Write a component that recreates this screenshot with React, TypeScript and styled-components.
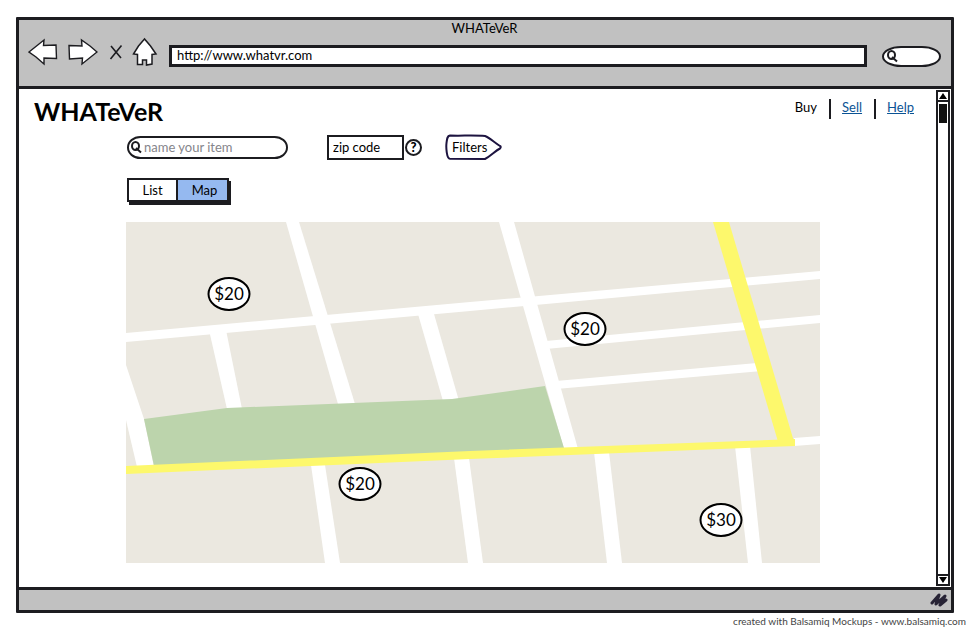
import React from "react";
import styled, { createGlobalStyle, css } from "styled-components";

const ink = "#1c1c20";
const chrome = "#c1c1c1";

const GlobalStyle = createGlobalStyle`
  *, *::before, *::after { box-sizing: border-box; }
  body {
    margin: 0;
    background: #fff;
    color: #000;
    font-family: Lato, "Liberation Sans", sans-serif;
    font-size: 13px;
    line-height: 16px;
  }
  button, input { font: inherit; color: inherit; }
`;

const Shell = styled.div`
  padding: 17px 16px 0;
`;

const BrowserWindow = styled.div`
  border: 3px solid ${ink};
  border-radius: 1px;
`;

const Chrome = styled.header`
  background: ${chrome};
  border-bottom: 3px solid ${ink};
  padding: 0 10px 18px 9px;
`;

const WindowTitle = styled.div`
  text-align: center;
  line-height: 16px;
`;

const Toolbar = styled.div`
  display: flex;
  align-items: center;
  height: 32px;
`;

const ToolButton = styled.button<{ $gap: number }>`
  flex: none;
  display: block;
  margin: 0 ${(p) => p.$gap}px 0 0;
  padding: 0;
  border: 0;
  background: none;
  cursor: pointer;
  svg { display: block; }
`;

const AddressInput = styled.input`
  flex: 1;
  min-width: 0;
  height: 22px;
  margin: 8px 15px 0 0;
  padding: 0 5px 2px;
  border: 3px solid ${ink};
  background: #fff;
  outline: none;
`;

const SearchBox = styled.label<{ $small?: boolean }>`
  display: flex;
  align-items: center;
  gap: ${(p) => (p.$small ? 3 : 2)}px;
  flex: none;
  width: ${(p) => (p.$small ? 59 : 161)}px;
  height: ${(p) => (p.$small ? 21 : 23)}px;
  padding: 0 8px 0 ${(p) => (p.$small ? 2 : 1)}px;
  border: 2px solid ${ink};
  border-radius: ${(p) => (p.$small ? "20px / 11px" : "14px / 12px")};
  background: #fff;
  ${(p) => p.$small && css`margin-top: 8px;`}
  svg { flex: none; }
`;

const BareInput = styled.input`
  flex: 1;
  min-width: 0;
  width: 100%;
  padding: 0;
  border: 0;
  background: none;
  outline: none;
  &::placeholder { color: #85858b; opacity: 1; }
`;

const Viewport = styled.div`
  display: flex;
  background: #fff;
`;

const Page = styled.div`
  flex: 1;
  min-width: 0;
  padding: 8px 0 24px;
`;

const PageHeader = styled.div`
  display: flex;
  justify-content: space-between;
  align-items: flex-start;
  padding: 0 22px 0 15px;
`;

const Brand = styled.h1`
  margin: 0;
  font-size: 25px;
  line-height: 28px;
  font-weight: 700;
`;

const Nav = styled.nav`
  display: flex;
  align-items: center;
  height: 20px;
  margin-top: 2px;
`;

const NavItem = styled.a<{ $current?: boolean }>`
  padding-bottom: 4px;
  color: ${(p) => (p.$current ? "#000" : "#0b5394")};
  text-decoration: ${(p) => (p.$current ? "none" : "underline")};
`;

const NavRule = styled.span`
  width: 2px;
  height: 20px;
  margin: 0 11px 0 12px;
  background: ${ink};
`;

const Content = styled.main`
  padding: 9px 116px 0 107px;
`;

const Filters = styled.div`
  display: flex;
  align-items: center;
  height: 26px;
  padding-left: 1px;
`;

const ZipInput = styled.input`
  width: 77px;
  height: 25px;
  margin-left: 39px;
  padding: 0 4px;
  border: 2px solid ${ink};
  background: #fff;
  outline: none;
  &::placeholder { color: #000; opacity: 1; }
`;

const HelpButton = styled.button`
  width: 17px;
  height: 17px;
  margin-left: 1px;
  padding: 0;
  border: 2px solid ${ink};
  border-radius: 50%;
  background: #fff;
  font-weight: 900;
  line-height: 13px;
`;

const TagButton = styled.button`
  position: relative;
  width: 57px;
  height: 26px;
  margin-left: 23px;
  padding: 0 15px 0 7px;
  border: 0;
  background: none;
  text-align: left;
  svg {
    position: absolute;
    inset: 0;
  }
  span { position: relative; }
`;

const Switch = styled.div`
  display: flex;
  width: 102px;
  height: 24px;
  margin: 18px 0 0 1px;
  border: 2px solid ${ink};
  box-shadow: 2px 3px 0 ${ink};
`;

const SwitchButton = styled.button<{ $on?: boolean }>`
  flex: 1;
  padding: 0;
  border: 0;
  background: ${(p) => (p.$on ? "#95b9f0" : "#fff")};
  & + & {
    flex: 0 0 51px;
    border-left: 2px solid ${ink};
    padding-left: 4px;
  }
`;

const MapFrame = styled.div`
  position: relative;
  margin-top: 20px;
  & > svg {
    display: block;
    width: 100%;
    height: auto;
  }
`;

const Pin = styled.button<{ $x: number; $y: number }>`
  position: absolute;
  left: ${(p) => (p.$x / 694) * 100}%;
  top: ${(p) => (p.$y / 341) * 100}%;
  width: 43px;
  height: 34px;
  transform: translate(-50%, -50%);
  padding: 0;
  border: 2px solid #000;
  border-radius: 50%;
  background: #fff;
  font-size: 17px;
  line-height: 28px;
`;

const Scrollbar = styled.div`
  display: flex;
  flex-direction: column;
  width: 14px;
  margin: 1px 1px 1px 0;
  border: 2px solid ${ink};
`;

const ScrollButton = styled.button<{ $down?: boolean }>`
  height: 10px;
  padding: 0;
  border: 0 solid ${ink};
  border-width: ${(p) => (p.$down ? "2px 0 0" : "0 0 2px")};
  background: #fff;
  svg { display: block; margin: 0 auto; }
`;

const Track = styled.div`
  flex: 1;
  padding: 2px 1px;
`;

const Thumb = styled.div`
  height: 19px;
  background: #111;
`;

const StatusBar = styled.footer`
  display: flex;
  justify-content: flex-end;
  align-items: center;
  height: 23px;
  padding-right: 3px;
  border-top: 3px solid ${ink};
  background: ${chrome};
`;

const Credit = styled.p`
  margin: 0;
  padding: 1px 4px 0 0;
  text-align: right;
  font-size: 10px;
  line-height: 14px;
  color: #444;
`;

const Magnifier = () => (
  <svg width="12" height="14" viewBox="0 0 12 14" fill="none" stroke={ink} strokeWidth="2">
    <ellipse cx="5.500" cy="6" rx="3.500" ry="4" />
    <path d="M6 8 11 12.500" />
  </svg>
);

const roads = [
  "160,0 173,0 229,182 212,182",
  "0,111 344,80 694,49 694,57 344,89 0,120",
  "83,108 100,108 116,187 101,187",
  "292,92 308,92 333,179 317,179",
  "373,0 388,0 452,227 438,227",
  "420,119 694,93 694,101 420,127",
  "430,159 631,141 636,149 430,167",
  "0,143 18,197 28,245 11,245 0,198",
  "185,243 199,243 214,341 199,341",
  "328,236 343,236 357,341 342,341",
  "468,230 483,230 496,341 481,341",
  "609,224 624,224 636,341 622,341",
  "668,216 694,214 694,222 668,224",
];

const pins = [
  { x: 103, y: 72, price: "$20" },
  { x: 459, y: 107, price: "$20" },
  { x: 234, y: 262, price: "$20" },
  { x: 595, y: 298, price: "$30" },
];

export default function App() {
  return (
    <>
      <GlobalStyle />
      <Shell>
        <BrowserWindow>
          <Chrome>
            <WindowTitle>WHATeVeR</WindowTitle>
            <Toolbar>
              <ToolButton $gap={10} aria-label="Back">
                <svg width="30" height="28" viewBox="0 0 30 28" fill="#fff" stroke={ink} strokeWidth="1.4">
                  <path d="M1 14 16 2 15.500 7.500 28 7 28.500 20.500 16 20 16 26 8 19Z" />
                </svg>
              </ToolButton>
              <ToolButton $gap={11} aria-label="Forward">
                <svg width="30" height="28" viewBox="0 0 30 28" fill="#fff" stroke={ink} strokeWidth="1.4">
                  <path d="M1 7.500 14 8 13.500 2 22 8 29 14 14 26 14.500 20 1.500 21Z" />
                </svg>
              </ToolButton>
              <ToolButton $gap={8} aria-label="Stop">
                <svg width="14" height="16" viewBox="0 0 14 16" fill="none" stroke={ink} strokeWidth="1.6">
                  <path d="M2 2 12 14M12.500 1.500 1.500 15" />
                </svg>
              </ToolButton>
              <ToolButton $gap={11} aria-label="Home">
                <svg width="27" height="30" viewBox="0 0 26 30" fill="#fff" stroke={ink} strokeWidth="1.5">
                  <path d="M13 2 7 9 2 17 6 17.500 6 27.500 11 27.500 11 23 15 23 15 28 20.500 27 20.500 17.500 24.500 17 19 9Z" />
                </svg>
              </ToolButton>
              <AddressInput aria-label="Address" defaultValue="http://www.whatvr.com" />
              <SearchBox $small>
                <Magnifier />
                <BareInput aria-label="Search the web" />
              </SearchBox>
            </Toolbar>
          </Chrome>
          <Viewport>
            <Page>
              <PageHeader>
                <Brand>WHATeVeR</Brand>
                <Nav>
                  <NavItem $current href="#buy">Buy</NavItem>
                  <NavRule />
                  <NavItem href="#sell">Sell</NavItem>
                  <NavRule />
                  <NavItem href="#help">Help</NavItem>
                </Nav>
              </PageHeader>
              <Content>
                <Filters>
                  <SearchBox>
                    <Magnifier />
                    <BareInput aria-label="Item" placeholder="name your item" />
                  </SearchBox>
                  <ZipInput aria-label="Zip code" placeholder="zip code" />
                  <HelpButton aria-label="Help with zip code">?</HelpButton>
                  <TagButton>
                    <svg width="57" height="26" viewBox="0 0 57 26" fill="#fff" stroke="#1d1440" strokeWidth="2">
                      <path d="M5 1.500C2 2 2 5 1.500 9S1.500 24.500 5 24.800L40 25C46 22 50 17 55 14.500 56 13.500 56 12.500 55 12 50 9 45 4 40 2 30 1 15 2 5 1.500Z" />
                    </svg>
                    <span>Filters</span>
                  </TagButton>
                </Filters>
                <Switch role="group" aria-label="View">
                  <SwitchButton aria-pressed="false">List</SwitchButton>
                  <SwitchButton $on aria-pressed="true">Map</SwitchButton>
                </Switch>
                <MapFrame>
                  <svg viewBox="0 0 694 341" role="img" aria-label="Street map">
                    <rect width="694" height="341" fill="#ebe8e0" />
                    <g fill="#fff">
                      {roads.map((points) => (
                        <polygon key={points} points={points} />
                      ))}
                    </g>
                    <polygon fill="#bcd4ac" points="18,197 101,186 326,177 419,164 438,226 28,244" />
                    <g fill="#fdf86c">
                      <polygon points="0,244 344,229 669,217 669,224 344,237 0,252" />
                      <polygon points="587,0 603,0 669,223 653,223" />
                    </g>
                  </svg>
                  {pins.map((pin) => (
                    <Pin key={pin.x} $x={pin.x} $y={pin.y}>{pin.price}</Pin>
                  ))}
                </MapFrame>
              </Content>
            </Page>
            <Scrollbar>
              <ScrollButton aria-label="Scroll up">
                <svg width="10" height="8" viewBox="0 0 10 8"><path d="M5 1 9 7H1Z" /></svg>
              </ScrollButton>
              <Track><Thumb /></Track>
              <ScrollButton $down aria-label="Scroll down">
                <svg width="10" height="8" viewBox="0 0 10 8"><path d="M5 7 9 1H1Z" /></svg>
              </ScrollButton>
            </Scrollbar>
          </Viewport>
          <StatusBar>
            <svg width="18" height="16" viewBox="0 0 18 16" fill="none" stroke="#272335" strokeWidth="3" strokeLinecap="round" strokeLinejoin="round">
              <path d="M2 11 9 3 6 12 15 4 10 13 16 8" />
            </svg>
          </StatusBar>
        </BrowserWindow>
      </Shell>
      <Credit>created with Balsamiq Mockups - www.balsamiq.com</Credit>
    </>
  );
}
